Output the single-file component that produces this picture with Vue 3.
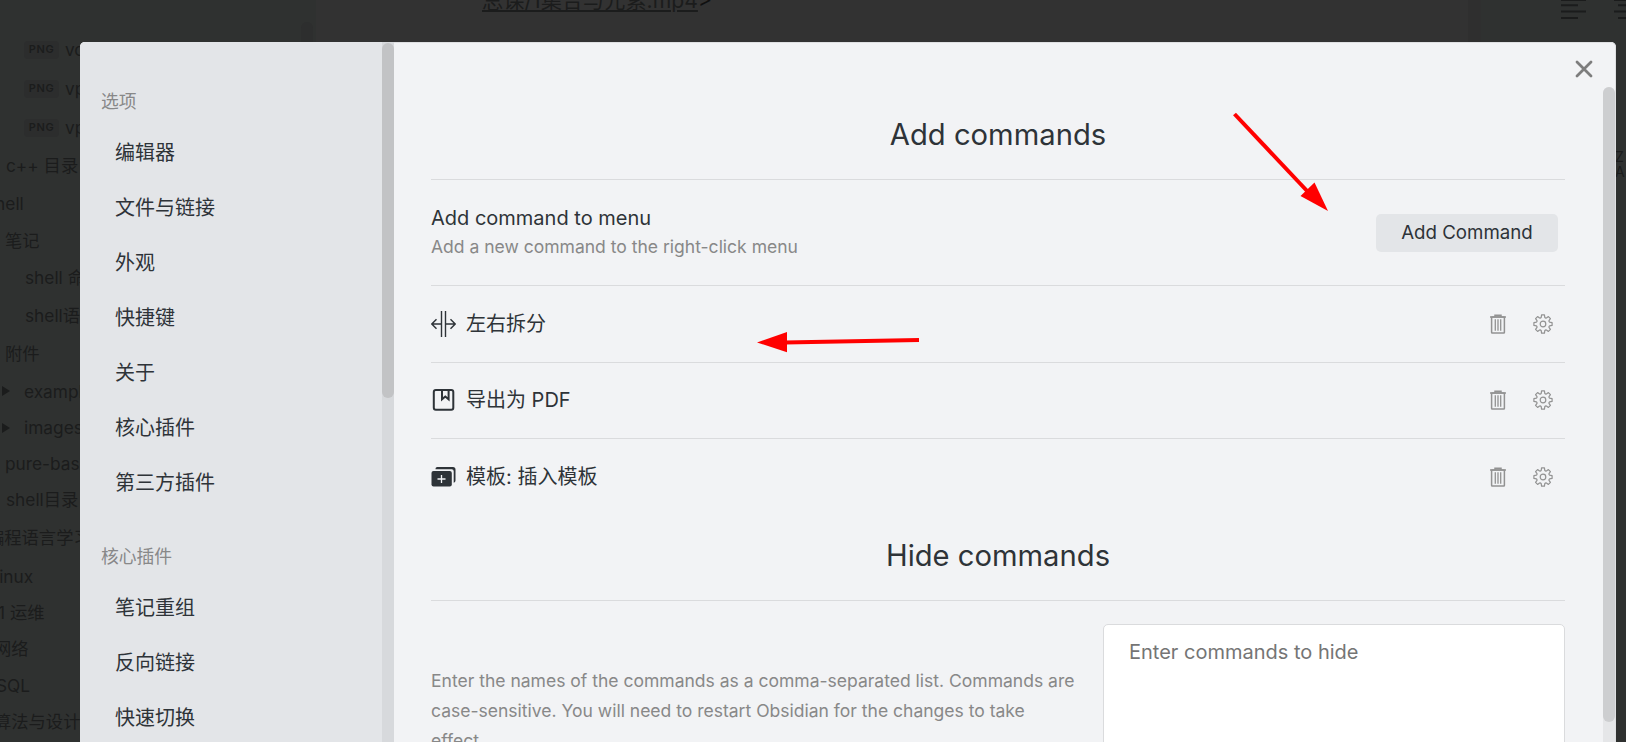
<script setup>
const tree = [
  { h: 39, x: 24, tag: 'PNG', text: 'vo' },
  { h: 39, x: 24, tag: 'PNG', text: 'vp' },
  { h: 39, x: 24, tag: 'PNG', text: 'vp' },
  { h: 38, x: 6, text: 'c++ 目录' },
  { h: 37, x: -14, text: 'shell' },
  { h: 37, x: 5, text: '笔记' },
  { h: 38, x: 25, text: 'shell 命令' },
  { h: 38, x: 25, text: 'shell语法' },
  { h: 37, x: 5, text: '附件' },
  { h: 38, x: 24, arrow: true, text: 'example' },
  { h: 35, x: 24, arrow: true, text: 'images' },
  { h: 36, x: 5, text: 'pure-bash' },
  { h: 38, x: 6, text: 'shell目录' },
  { h: 38, x: -13, text: '编程语言学习' },
  { h: 38, x: -5, text: 'linux' },
  { h: 36, x: -2, text: '1 运维' },
  { h: 36, x: -6, text: '网络' },
  { h: 37, x: -4, text: 'SQL' },
  { h: 36, x: -6, text: '算法与设计' },
]
const hasCjk = (s) => /[\u4e00-\u9fff]/.test(s)
const groups = [
  { title: '选项', items: ['编辑器', '文件与链接', '外观', '快捷键', '关于', '核心插件', '第三方插件'] },
  { title: '核心插件', items: ['笔记重组', '反向链接', '快速切换'] },
]
const commands = [
  { icon: 'split', name: '左右拆分' },
  { icon: 'pdf', name: '导出为 PDF' },
  { icon: 'template', name: '模板: 插入模板' },
]
const teeth = Array.from({ length: 8 }, (_, i) => {
  const p = (r, deg) => {
    const a = ((deg + i * 45) * Math.PI) / 180
    return `${(10 + r * Math.sin(a)).toFixed(2)} ${(10 - r * Math.cos(a)).toFixed(2)}`
  }
  return `${i ? 'L' : 'M'}${p(6.9, -15)}L${p(9.2, -9)}L${p(9.2, 9)}L${p(6.9, 15)}Q${p(6.2, 22.5)} ${p(6.9, 30)}`
}).join('') + 'Z'
</script>

<template>
  <div class="app">
    <div class="workspace">
      <div class="files">
        <div v-for="(r, i) in tree" :key="i" class="node" :class="{ cjk: hasCjk(r.text) }" :style="{ height: r.h + 'px', paddingLeft: Math.max(r.x, 0) + 'px', textIndent: Math.min(r.x, 0) + 'px' }">
          <svg v-if="r.arrow" class="arrow" width="8" height="10" viewBox="0 0 8 10"><path d="M0 0L8 5L0 10Z" /></svg>
          <span v-if="r.tag" class="tag">{{ r.tag }}</span>
          <span>{{ r.text }}</span>
        </div>
        <div class="files-thumb"></div>
      </div>
      <div class="editor"><span class="link">总课/1集合与元素.mp4</span>&gt;</div>
      <div class="gutter"></div>
      <div class="rightbar">
        <svg width="145" height="190" viewBox="0 0 145 190" fill="none" stroke="#1b1c1c" stroke-width="2">
          <path d="M80 0H105M80 5.300H97M80 11.500H105M80 18H97M133 0H158M137 5.300H150M133 11.500H158M137 18H150" />
        </svg>
        <div class="sort"><span>Z</span><span>A</span></div>
      </div>
    </div>

    <div class="modal">
      <nav class="nav">
        <div class="nav-list">
          <section v-for="g in groups" :key="g.title" class="group">
            <div class="group-title">{{ g.title }}</div>
            <div v-for="it in g.items" :key="it" class="nav-item">{{ it }}</div>
          </section>
        </div>
        <div class="nav-bar"><div class="nav-thumb"></div></div>
      </nav>

      <main class="content">
        <h2 class="first">Add commands</h2>
        <div class="item intro">
          <div>
            <div class="name">Add command to menu</div>
            <div class="desc">Add a new command to the right-click menu</div>
          </div>
          <button>Add Command</button>
        </div>
        <div v-for="c in commands" :key="c.name" class="item cmd">
          <svg v-if="c.icon === 'split'" class="ico" viewBox="0 0 25 26" fill="none" stroke="#2e3338" stroke-width="1.400">
            <path d="M10.500 0V26M14.500 0V26M.8 13H10.500M14.500 13H24.200M5.500 8.200L.8 13L5.500 17.800M19.500 8.200L24.200 13L19.500 17.800" />
          </svg>
          <svg v-else-if="c.icon === 'pdf'" class="ico" viewBox="0 0 25 26" fill="none" stroke="#2e3338" stroke-width="2">
            <rect x="2.800" y="3" width="19.500" height="19.700" rx="2" />
            <path d="M11 3V12.300L14.300 9.500L17.600 12.300V3" />
          </svg>
          <svg v-else class="ico" viewBox="0 0 25 26" fill="#2e3338">
            <path d="M4.500 5.200V4.800Q4.500 3 6.300 3H22Q24.500 3 24.500 5.500V16.500Q24.500 18.600 22.700 18.700V7.200Q22.700 5.200 20.700 5.200Z" />
            <rect x=".5" y="7" width="20.300" height="15.600" rx="2" />
            <path d="M10.500 11V19M6.500 15H14.500" stroke="#f2f3f5" stroke-width="1.300" />
          </svg>
          <span class="name">{{ c.name }}</span>
          <span class="actions">
            <svg width="16" height="20" viewBox="0 0 16 20" fill="none" stroke="#929292" stroke-width="1.500">
              <path d="M0 3H16M5 2.500V1.300H11V2.500" />
              <rect x="1.600" y="3" width="12.800" height="16" rx=".6" />
              <path d="M5.300 5.300V16.700M8 5.300V16.700M10.700 5.300V16.700" stroke-width="1.300" />
            </svg>
            <svg width="20" height="20" viewBox="0 0 20 20" fill="none" stroke="#929292" stroke-width="1.200" stroke-linejoin="round">
              <path :d="teeth" /><circle cx="10" cy="10" r="2.800" />
            </svg>
          </span>
        </div>
        <h2 class="second">Hide commands</h2>
        <div class="item hide">
          <div class="desc long">Enter the names of the commands as a comma-separated list. Commands are case-sensitive. You will need to restart Obsidian for the changes to take effect.</div>
          <textarea placeholder="Enter commands to hide"></textarea>
        </div>
      </main>
      <svg class="close" width="18" height="18" viewBox="0 0 18 18"><path d="M2 2L16 16M16 2L2 16" stroke="#7d7d7d" stroke-width="2.800" stroke-linecap="round" /></svg>
      <div class="main-bar"><div class="main-thumb"></div></div>
    </div>

    <svg class="marks" width="1626" height="742" viewBox="0 0 1626 742" fill="#f00" stroke="#f00">
      <path d="M1234.500 114L1309 193" stroke-width="4" />
      <path d="M1328 211L1300.500 196L1314.500 182.500Z" stroke="none" />
      <path d="M919 340L785 342.500" stroke-width="4" />
      <path d="M757 342.500L787 332V352.200Z" stroke="none" />
    </svg>
  </div>
</template>

<style>
body { margin: 0; overflow: hidden; }
</style>
<style scoped>
.app {
  position: relative; width: 1626px; height: 742px; overflow: hidden;
  font-family: Inter, "Noto Sans CJK SC", sans-serif; font-size: 20px; color: #2e3338;
}
.workspace { display: flex; height: 742px; background: #323232; color: #1b1c1c; }
.files { position: relative; box-sizing: border-box; width: 316px; padding-top: 30px; background: #2f3130; font-size: 17.300px; }
.node { position: relative; box-sizing: border-box; display: flex; align-items: center; white-space: nowrap; }
.cjk { padding-bottom: 3px; }
.arrow { position: absolute; left: 2px; fill: #1b1c1c; }
.tag { box-sizing: border-box; width: 35px; height: 18px; margin-right: 6px; border-radius: 4px; background: #2c2d2d; text-align: center; font-size: 11px; line-height: 17px; font-weight: 600; letter-spacing: .6px; }
.files-thumb { position: absolute; left: 301px; top: 22px; width: 12px; height: 400px; border-radius: 6px; background: #2d2e2e; }
.editor { flex: 1; padding-left: 166px; line-height: 28px; margin-top: -14px; font-size: 21.200px; color: #101010; }
.link { color: #1b1c1c; text-decoration: underline; text-decoration-thickness: 2px; text-underline-offset: 2px; }
.gutter { width: 13px; background: #2f2f2f; }
.rightbar { position: relative; width: 145px; background: #2f3130; overflow: hidden; }
.sort { position: absolute; left: 134px; top: 149px; display: flex; flex-direction: column; font-size: 14px; line-height: 15px; }
.modal { position: absolute; left: 80px; top: 42px; width: 1536px; height: 720px; border-radius: 5px; overflow: hidden; display: flex; background: #f2f3f5; box-shadow: inset 0 0 0 1px #dfe0e2; }
.nav { display: flex; width: 314px; background: #e3e5e8; }
.nav-list { flex: 1; padding-top: 40px; }
.nav-bar { width: 12px; background: #d7d9dc; }
.nav-thumb { margin-top: 1px; height: 355px; border-radius: 6px; background: #c2c3c5; }
.group { margin-bottom: 26px; }
.group-title { height: 44px; padding-left: 21px; line-height: 40px; font-size: 17.800px; color: #888; }
.nav-item { height: 55px; padding-left: 35px; line-height: 55px; }
.content { flex: 1; padding: 0 51px 0 37px; }
h2 { margin: 0; text-align: center; font-weight: 400; font-size: 29.200px; }
.first { height: 137px; line-height: 186px; }
.second { height: 85px; line-height: 82px; }
.item { display: flex; box-sizing: border-box; border-top: 1px solid #dadbdd; }
.intro { height: 106px; align-items: center; justify-content: space-between; padding-right: 7px; }
.intro > div { padding-bottom: 2px; }
.name { line-height: 30px; }
.desc { line-height: 28px; font-size: 17.530px; color: #888; }
button { width: 182px; height: 38px; padding: 0; border: 0; border-radius: 5px; background: #e3e5e8; color: #2e3338; font: inherit; font-size: 18.700px; }
.cmd { height: 76.500px; align-items: center; }
.ico { width: 25px; height: 26px; margin-right: 10px; }
.actions { display: flex; gap: 27px; margin-left: auto; padding-right: 12px; }
.hide { padding-top: 23px; justify-content: space-between; }
.long { width: 650px; padding-top: 42px; line-height: 30px; }
textarea { box-sizing: border-box; width: 462px; height: 196px; padding: 12px 25px; border: 1px solid #dadbdd; border-radius: 5px; background: #fff; font: inherit; line-height: 30px; resize: none; }
textarea::placeholder { color: #757575; }
.close { position: absolute; left: 1495px; top: 18px; }
.main-bar { position: absolute; left: 1523px; top: 45px; width: 12px; height: 675px; border-radius: 6px 6px 0 0; background: #e5e6e8; }
.main-thumb { height: 635px; border-radius: 6px; background: #cdced0; }
.marks { position: absolute; left: 0; top: 0; pointer-events: none; }
</style>
